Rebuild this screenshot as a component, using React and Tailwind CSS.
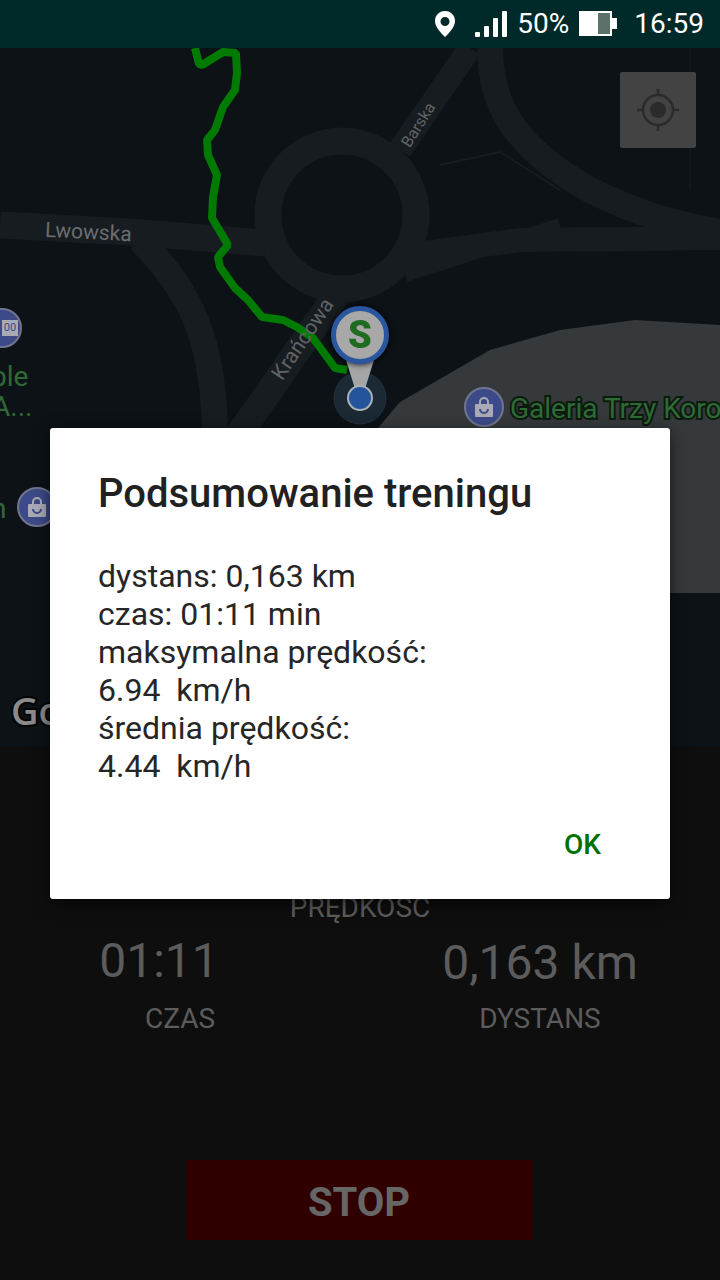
import React from 'react'

const route = 'M195 48 L199 64 L202 65 L223 52 L236 53 L237 73 L235 90 L223 107 L215 130 L207 140 L208 155 L217 175 L213 197 L212 218 L228 245 L218 257 L220 267 L235 288 L248 300 L262 317 L283 320 L297 327 L313 338 L327 357 L335 368 L347 370'

const MapRoads = () => (
  <svg className="absolute inset-0" width="720" height="698" viewBox="0 48 720 698">
    <path d="M378 428 L400 402 L490 350 L560 330 L635 320 L720 325 L720 593 L378 593 Z" fill="#36393b" />
    <g fill="none" stroke="#171c20">
      <circle cx="342" cy="215" r="74" strokeWidth="27" />
      <path d="M0 225 L130 232 L265 243" strokeWidth="27" />
      <path d="M410 255 L520 240 L720 238" strokeWidth="24" />
      <path d="M400 150 L470 48" strokeWidth="24" />
      <path d="M490 48 C490 110 520 150 590 190 C640 215 680 225 720 232" strokeWidth="26" />
      <path d="M340 290 L235 440" strokeWidth="27" />
      <path d="M405 275 L560 225" strokeWidth="14" />
      <path d="M140 240 C190 290 215 340 215 440" strokeWidth="26" />
      <path d="M440 165 L500 152 L560 190" strokeWidth="2" />
      <path d="M690 48 L690 190" strokeWidth="1" />
    </g>
    <path d={route} fill="none" stroke="#007a00" strokeWidth="8" strokeLinejoin="bevel" />
    <circle cx="360" cy="398" r="26" fill="#1b2935" stroke="#24313c" />
    <path d="M346 360 L374 360 L364 392 L356 392 Z" fill="#a5a5a5" />
    <circle cx="360" cy="398" r="12" fill="#24549c" stroke="#a9b0b8" strokeWidth="2" />
  </svg>
)

const BagIcon = () => (
  <svg width="24" height="24" viewBox="0 0 24 24">
    <path d="M8 9 V7 a4 4 0 0 1 8 0 V9" fill="none" stroke="#aaaab4" strokeWidth="2" />
    <rect x="3" y="9" width="18" height="13" rx="1" fill="#aaaab4" />
    <path d="M8 14 a4 4 0 0 0 8 0" fill="none" stroke="#3d4a88" strokeWidth="2" />
  </svg>
)

const Poi = ({ className, children }) => (
  <div className={'absolute flex h-10 w-10 items-center justify-center rounded-full border-2 border-[#70758f] bg-[#3c4a89] ' + className}>
    {children}
  </div>
)

const StatusBar = () => (
  <div className="flex h-12 items-center justify-end bg-[#002a2a] pr-4 text-white">
    <svg width="22" height="28" viewBox="0 0 22 28" className="mr-[18px]">
      <path fillRule="evenodd" d="M11 1 C5 1 1 5.5 1 11 C1 17 7 23 11 27 C15 23 21 17 21 11 C21 5.5 17 1 11 1 Z M11 7 a4.5 4.5 0 1 1 0 9 a4.5 4.5 0 0 1 0 -9 Z" fill="#fff" />
    </svg>
    <svg width="34" height="28" viewBox="0 0 34 28" className="mr-[9px]">
      <rect x="1" y="22" width="5" height="5" rx="1" fill="#fff" />
      <rect x="10" y="16" width="5" height="11" rx="1" fill="#fff" />
      <rect x="19" y="8" width="5" height="19" rx="1" fill="#fff" />
      <rect x="28" y="1" width="5" height="26" rx="1" fill="#fff" />
    </svg>
    <span className="mr-[10px] font-['Roboto',sans-serif] text-[28px] leading-none">50%</span>
    <svg width="39" height="26" viewBox="0 0 39 26" className="mr-[16px]">
      <rect x="0" y="0" width="33" height="25" fill="#fff" />
      <rect x="19" y="2" width="12" height="21" fill="#5c706c" />
      <rect x="33" y="7" width="5" height="11" fill="#fff" />
    </svg>
    <span className="font-['Roboto',sans-serif] text-[28px] leading-none">16:59</span>
  </div>
)

const MapView = () => (
  <div className="relative h-[698px] overflow-hidden bg-[#0c1216] font-['Roboto',sans-serif]">
    <MapRoads />

    <div className="absolute right-6 top-6 flex h-[76px] w-[76px] items-center justify-center rounded-[2px] bg-[#434343]">
      <svg width="44" height="44" viewBox="0 0 44 44" fill="none" stroke="#2b2b2b" strokeWidth="2.5">
        <circle cx="22" cy="22" r="15" />
        <path d="M22 1 V7 M22 37 V43 M1 22 H7 M37 22 H43" />
        <circle cx="22" cy="22" r="8" fill="#2b2b2b" stroke="none" />
      </svg>
    </div>

    <span className="absolute left-[45px] top-[172px] rotate-[3deg] text-[21px] leading-6 text-[#6a6e70]">Lwowska</span>
    <span className="absolute left-[394px] top-[67px] -rotate-[58deg] text-[16px] leading-5 text-[#5f6366]">Barska</span>
    <span className="absolute left-[256px] top-[279px] -rotate-[56deg] text-[21px] leading-6 text-[#5f6366]">Krańcowa</span>

    <div className="absolute left-[331px] top-[258px] flex h-[58px] w-[58px] items-center justify-center rounded-full border-[5px] border-[#2a56a0] bg-[#a8a8a8] shadow-[0_0_6px_#000] blur-[0.6px]">
      <span className="font-['Roboto',sans-serif] text-[38px] font-black leading-none text-[#1f6b22]">S</span>
    </div>

    <Poi className="-left-[18px] top-[260px]">
      <span className="ml-4 bg-[#aaaab4] px-[2px] text-[11px] leading-4 text-[#3c4a89]">00</span>
    </Poi>
    <span className="absolute -left-[9px] top-[313px] text-[28px] leading-8 text-[#2f6a36]">ble</span>
    <span className="absolute -left-[8px] top-[343px] text-[28px] leading-8 text-[#2f6a36]">A...</span>

    <span className="absolute -left-[9px] top-[445px] text-[28px] leading-8 text-[#2f6a36]">n</span>
    <Poi className="left-[17px] top-[439px]"><BagIcon /></Poi>

    <Poi className="left-[464px] top-[339px]"><BagIcon /></Poi>
    <span className="absolute left-[510px] top-[345px] whitespace-nowrap text-[28px] leading-8 text-[#2f6a36] [-webkit-text-stroke:4px_#0c1a0e] [paint-order:stroke_fill]">Galeria Trzy Korony</span>

    <span className="absolute left-[11px] top-[642px] font-['Open_Sans',sans-serif] text-[38px] font-semibold leading-10 text-[#8a8a8a] [-webkit-text-stroke:4px_#050505] [paint-order:stroke_fill]">Go</span>
  </div>
)

const StatsPanel = () => (
  <div className="h-[534px] bg-[#0e0e0e] font-['Roboto',sans-serif] text-[#5c5c5c]">
    <div className="pt-[146px] text-center text-[28px] leading-[32px]">PRĘDKOŚĆ</div>
    <div className="mt-[9px] grid grid-cols-2 text-center">
      <div>
        <div className="mr-[42px] text-[48px] leading-[56px]">01:11</div>
        <div className="mt-[14px] text-[28px] leading-[32px]">CZAS</div>
      </div>
      <div>
        <div className="translate-y-[2px] text-[48px] leading-[56px]">0,163 km</div>
        <div className="mt-[14px] text-[28px] leading-[32px]">DYSTANS</div>
      </div>
    </div>
    <button className="ml-[186px] mt-[125px] flex h-20 w-[346px] items-center justify-center bg-[#300000] pt-[5px] text-[40px] font-bold text-[#666666]">STOP</button>
  </div>
)

const SummaryDialog = () => (
  <div className="absolute left-[50px] top-[428px] h-[471px] w-[620px] rounded-[3px] bg-white font-['Roboto',sans-serif] shadow-[0_4px_16px_rgba(0,0,0,0.6)]">
    <h2 className="pl-[48px] pt-[43px] text-[40px] font-medium leading-[46px] text-[#212121]">Podsumowanie treningu</h2>
    <div className="pl-[48px] pt-[40px] text-[32px] leading-[38px] text-[#262626]">
      <div>dystans: 0,163 km</div>
      <div>czas: 01:11 min</div>
      <div>maksymalna prędkość:</div>
      <div className="whitespace-pre">6.94  km/h</div>
      <div>średnia prędkość:</div>
      <div className="whitespace-pre">4.44  km/h</div>
    </div>
    <div className="pr-[69px] pt-[44px] text-right text-[28px] font-medium leading-8 text-[#007000]">OK</div>
  </div>
)

export default function App () {
  return (
    <div className="relative h-[1280px] w-[720px] overflow-hidden bg-[#0e0e0e]">
      <StatusBar />
      <MapView />
      <StatsPanel />
      <SummaryDialog />
    </div>
  )
}
